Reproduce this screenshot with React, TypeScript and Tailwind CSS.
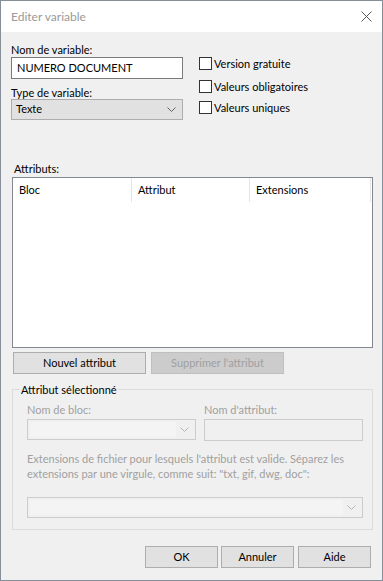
import React from 'react';

function Chevron({ color = '#606060' }: { color?: string }) {
  return (
    <svg width="9" height="5" viewBox="0 0 9 5" className="shrink-0">
      <polyline points="0.5,0.5 4.5,4.5 8.5,0.5" fill="none" stroke={color} strokeWidth="1" />
    </svg>
  );
}

function Checkbox({ label, className = '' }: { label: string; className?: string }) {
  return (
    <div className={`flex items-center h-[13px] ${className}`}>
      <div className="w-[13px] h-[13px] border border-[#333333] bg-white shrink-0" />
      <span className="ml-[2px] leading-[13px] whitespace-nowrap">{label}</span>
    </div>
  );
}

function DisabledCombo({ width }: { width: string }) {
  return (
    <div className={`${width} h-[21px] border border-[#cccccc] bg-[#f0f0f0] flex items-center p-[2px]`}>
      <div className="flex-1 h-full bg-[#f4f4f4]" />
      <div className="w-[17px] flex justify-center">
        <Chevron color="#b5b5b5" />
      </div>
    </div>
  );
}

export default function App() {
  return (
    <div className="w-[383px] h-[581px] border border-[#868e99] bg-[#f0f0f0] flex flex-col font-['Lato',sans-serif] text-[11px] text-black">
      {/* title bar */}
      <div className="h-[31px] shrink-0 bg-white flex items-center justify-between pl-[10px] pr-[10px]">
        <span className="text-[#9a9a9a] text-[12px]">Editer variable</span>
        <svg width="11" height="11" viewBox="0 0 11 11">
          <line x1="0.5" y1="0.5" x2="10.5" y2="10.5" stroke="#555" strokeWidth="1" />
          <line x1="10.5" y1="0.5" x2="0.5" y2="10.5" stroke="#555" strokeWidth="1" />
        </svg>
      </div>

      <div className="flex-1 flex flex-col pl-[10px] pt-[11px] pb-[12px]">
        {/* top fields */}
        <div className="flex">
          <div className="w-[172px] flex flex-col">
            <label className="leading-[14px]">Nom de variable:</label>
            <div className="h-[22px] border border-[#7a7a7a] bg-white flex items-center px-[5px]">
              NUMERO DOCUMENT
            </div>
            <label className="mt-[7px] leading-[13px]">Type de variable:</label>
            <div className="h-[21px] border border-[#adadad] bg-[#e1e1e1] flex items-center justify-between pl-[4px] pr-[6px]">
              <span>Texte</span>
              <Chevron />
            </div>
          </div>
          <div className="ml-[16px] flex flex-col">
            <Checkbox label="Version gratuite" className="mt-[14px]" />
            <Checkbox label="Valeurs obligatoires" className="mt-[10px]" />
            <Checkbox label="Valeurs uniques" className="mt-[8px]" />
          </div>
        </div>

        {/* attributes list */}
        <label className="mt-[42px] ml-[3px] leading-[14px]">Attributs:</label>
        <div className="mt-[1px] ml-[1px] w-[361px] h-[171px] border border-[#828790] bg-white">
          <div className="flex h-[24px]">
            <div className="w-[119px] border-r border-[#e5e5e5] flex items-center pl-[6px] pt-[1px]">Bloc</div>
            <div className="w-[118px] border-r border-[#e5e5e5] flex items-center pl-[6px] pt-[1px]">Attribut</div>
            <div className="w-[121px] border-r border-[#e5e5e5] flex items-center pl-[6px] pt-[1px]">Extensions</div>
          </div>
        </div>

        <div className="flex mt-[4px] ml-[2px] gap-[5px]">
          <button className="w-[133px] h-[22px] border border-[#adadad] bg-[#e1e1e1] text-black">Nouvel attribut</button>
          <button className="w-[133px] h-[22px] border border-[#bfbfbf] bg-[#cccccc] text-[#a0a0a0]">Supprimer l'attribut</button>
        </div>

        {/* selected attribute group */}
        <fieldset className="mt-[8px] ml-[1px] w-[361px] h-[148px] border border-[#dcdcdc]">
          <legend className="ml-[7px] px-[1px] leading-[15px]">Attribut sélectionné</legend>
          <div className="pl-[14px] pt-[5px] text-[#a0a0a0]">
            <div className="flex">
              <div className="w-[169px] flex flex-col">
                <span className="leading-[16px]">Nom de bloc:</span>
                <div className="mt-[1px]">
                  <DisabledCombo width="w-[169px]" />
                </div>
              </div>
              <div className="ml-[8px] w-[159px] flex flex-col">
                <span className="leading-[16px]">Nom d'attribut:</span>
                <div className="mt-[1px] h-[22px] border border-[#cccccc] bg-[#f0f0f0]" />
              </div>
            </div>
            <p className="mt-[10px] leading-[15px] pr-[10px]">
              Extensions de fichier pour lesquels l'attribut est valide. Séparez les extensions par une virgule, comme suit: "txt, gif, dwg, doc":
            </p>
            <div className="mt-[16px]">
              <DisabledCombo width="w-[336px]" />
            </div>
          </div>
        </fieldset>

        {/* dialog buttons */}
        <div className="mt-auto flex justify-end pr-[11px]">
          <button className="w-[73px] h-[22px] border border-[#adadad] bg-[#e1e1e1]">OK</button>
          <button className="ml-[3px] w-[73px] h-[22px] border border-[#adadad] bg-[#e1e1e1]">Annuler</button>
          <button className="ml-[4px] w-[73px] h-[22px] border border-[#adadad] bg-[#e1e1e1]">Aide</button>
        </div>
      </div>
    </div>
  );
}
